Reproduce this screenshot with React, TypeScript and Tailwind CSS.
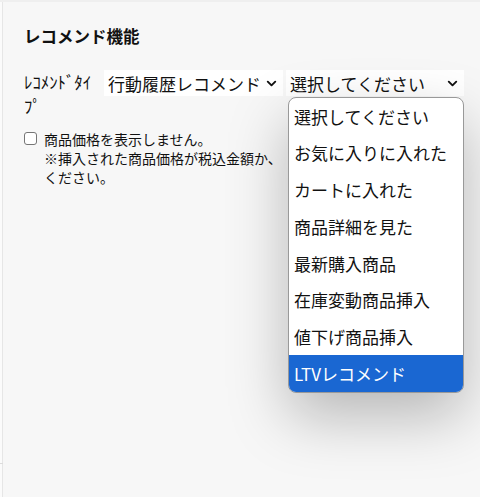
import { ChevronDown } from "lucide-react";

const options = [
  "選択してください",
  "お気に入りに入れた",
  "カートに入れた",
  "商品詳細を見た",
  "最新購入商品",
  "在庫変動商品挿入",
  "値下げ商品挿入",
  "LTVレコメンド",
];

const SelectBox = ({ label, width }: { label: string; width: string }) => (
  <div
    className={`${width} h-[26px] bg-white flex items-center justify-between pl-[4px] pr-[4px] text-[17px] text-[#111] leading-none`}
  >
    <span className="whitespace-nowrap">{label}</span>
    <ChevronDown size={15} strokeWidth={3} className="text-[#111]" />
  </div>
);

export default function App() {
  return (
    <div
      className="w-[480px] h-[497px] bg-[#f7f7f7] relative overflow-hidden text-[#111]"
      style={{ fontFamily: '"Noto Sans CJK JP", "Noto Sans", sans-serif' }}
    >
      {/* frame edges */}
      <div className="absolute top-0 left-0 w-full h-[2px] bg-[#efefef]" />
      <div className="absolute top-[2px] left-0 w-[3px] h-full bg-[#fbfbfb] border-r border-[#e6e6e6]" />
      <div className="absolute top-[463px] left-0 w-[3px] h-[1px] bg-[#dcdcdc]" />

      <div className="pl-[24px] pt-[24px]">
        <h2 className="text-[16.5px] font-bold leading-[24px]">レコメンド機能</h2>

        <div className="flex items-start mt-[22px]">
          <div className="w-[80px] text-[16.8px] leading-[24px]">ﾚｺﾒﾝﾄﾞﾀｲﾌﾟ</div>
          <div className="flex gap-[3px]">
            <SelectBox label="行動履歴レコメンド" width="w-[179px]" />
            <div className="relative">
              <SelectBox label="選択してください" width="w-[178px]" />
              <div className="absolute top-[27px] left-[2px] w-[176px] bg-white border border-[#999] rounded-[8px] overflow-hidden z-10 shadow-[0_24px_60px_rgba(0,0,0,0.26)]">
                {options.map((o, i) => (
                  <div
                    key={o}
                    className={`h-[36.75px] flex items-center pl-[5px] text-[17px] whitespace-nowrap ${
                      i === options.length - 1 ? "bg-[#1a67d2] text-white" : "text-[#111]"
                    }`}
                  >
                    {o}
                  </div>
                ))}
              </div>
            </div>
          </div>
        </div>

        <div className="flex items-start mt-[12px]">
          <div className="w-[13px] h-[13px] mt-[2px] border border-[#767676] rounded-[3px] bg-white shrink-0" />
          <div className="ml-[7px] text-[14px] leading-[19px] w-[240px]">
            <div>商品価格を表示しません。</div>
            <div className="whitespace-nowrap">※挿入された商品価格が税込金額か、</div>
            <div>ください。</div>
          </div>
        </div>
      </div>
    </div>
  );
}
